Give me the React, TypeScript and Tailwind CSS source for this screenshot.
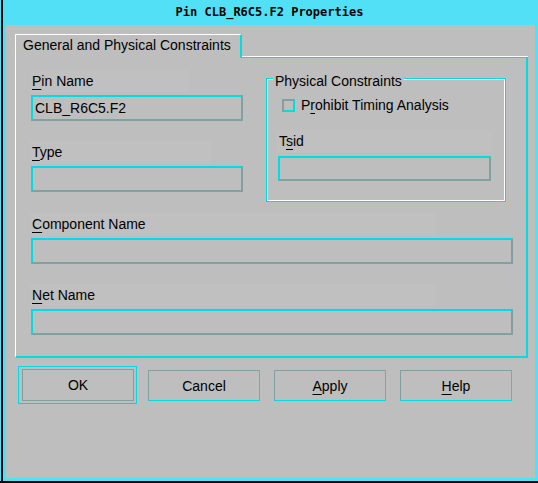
import React from 'react';

function FieldLabel({ className, children }: { className: string; children: React.ReactNode }) {
  return (
    <div className={`flex h-[22px] items-center -ml-px pl-[2px] bg-[#c0c0c0] leading-4 ${className}`}>
      {children}
    </div>
  );
}

function Field({ className, value }: { className: string; value?: string }) {
  return (
    <div
      className={`flex items-center border-2 border-t-[#00dce4] border-l-[#00dce4] border-b-[#82a0a0] border-r-[#82a0a0] px-[2px] leading-4 ${className}`}
    >
      {value}
    </div>
  );
}

function Button({ children, className }: { children: React.ReactNode; className: string }) {
  return (
    <div
      className={`flex w-[112px] items-center justify-center border border-t-[#82a0a0] border-l-[#82a0a0] border-b-[#00dce4] border-r-[#00dce4] leading-4 ${className}`}
    >
      {children}
    </div>
  );
}

export default function App() {
  return (
    <div className="relative h-[483px] w-[538px] border-b-2 border-b-black bg-[#52e0f7] pl-px font-['Liberation_Sans',Arial,sans-serif] text-[14px] text-black">
      <div className="flex h-full flex-col border-l-2 border-l-black pb-[3px] pl-[3px] pr-[3px]">
        {/* title bar */}
        <div className="flex h-[25px] items-center justify-center pb-px pr-[2px] font-['DejaVu_Sans_Mono',monospace] text-[12px] font-bold">
          Pin CLB_R6C5.F2 Properties
        </div>

        <div className="flex-1 bg-[#bebebe] pl-[9px] pt-[9px]">
          {/* tab strip */}
          <div className="flex h-[24px] w-[513px]">
            <div className="w-[227px] border-l border-t border-l-white border-t-white border-r-2 border-r-[#00dce4] pl-[7px] pt-[2px] leading-4">
              General and Physical Constraints
            </div>
            <div className="flex-1 border-b border-b-[#00dce4] shadow-[inset_0_-1px_0_#ffffff]" />
          </div>

          {/* tab panel */}
          <div className="w-[513px] border-l border-l-white border-r-2 border-r-[#00dce4] border-b-2 border-b-[#00dce4] pb-[21px] pl-[15px] pt-[12px]">
            <div className="flex items-start">
              <div className="w-[212px]">
                <FieldLabel className="w-[159px]">
                  <span><span className="underline underline-offset-[3px]">P</span>in Name</span>
                </FieldLabel>
                <Field className="mt-[3px] h-[26px] w-[212px]" value="CLB_R6C5.F2" />
                <FieldLabel className="mt-[20px] w-[181px]">
                  <span><span className="underline underline-offset-[3px]">T</span>ype</span>
                </FieldLabel>
                <Field className="mt-[3px] h-[26px] w-[212px]" />
              </div>

              <div className="relative ml-[23px] mt-[8px] w-[240px] border border-[#00dce4] pb-[20px] pl-[11px] pt-[18px] shadow-[inset_0_0_0_1px_#ffffff]">
                <span className="absolute left-[6px] top-[-6px] bg-[#bebebe] px-[2px] leading-4">
                  Physical Constraints
                </span>
                <div className="ml-[4px] flex h-4 items-center">
                  <div className="h-[13px] w-[13px] border-2 border-t-[#82a0a0] border-l-[#82a0a0] border-b-[#00dce4] border-r-[#00dce4]" />
                  <span className="ml-[6px] leading-4">
                    P<span className="underline underline-offset-[3px]">r</span>ohibit Timing Analysis
                  </span>
                </div>
                <FieldLabel className="mt-[17px] w-[215px]">
                  <span>T<span className="underline underline-offset-[3px]">s</span>id</span>
                </FieldLabel>
                <Field className="mt-[4px] h-[25px] w-[213px]" />
              </div>
            </div>

            <FieldLabel className="mt-[11px] w-[406px]">
              <span><span className="underline underline-offset-[3px]">C</span>omponent Name</span>
            </FieldLabel>
            <Field className="mt-[3px] h-[26px] w-[482px]" />
            <FieldLabel className="mt-[20px] w-[406px]">
              <span><span className="underline underline-offset-[3px]">N</span>et Name</span>
            </FieldLabel>
            <Field className="mt-[3px] h-[26px] w-[482px]" />
          </div>

          {/* buttons */}
          <div className="ml-[3px] mt-[8px] flex items-start">
            <div className="border border-t-[#00dce4] border-l-[#00dce4] border-r-[#00dce4] border-b-[#82a0a0] pb-[2px] pl-[3px] pr-[2px] pt-[2px]">
              <div className="flex h-[32px] w-[112px] items-center justify-center border border-[#82a0a0] leading-4">
                OK
              </div>
            </div>
            <Button className="ml-[11px] mt-[4px] h-[31px]">Cancel</Button>
            <Button className="ml-[14px] mt-[4px] h-[31px]">
              <span><span className="underline underline-offset-[3px]">A</span>pply</span>
            </Button>
            <Button className="ml-[14px] mt-[4px] h-[31px]">
              <span><span className="underline underline-offset-[3px]">H</span>elp</span>
            </Button>
          </div>
        </div>
      </div>
    </div>
  );
}
